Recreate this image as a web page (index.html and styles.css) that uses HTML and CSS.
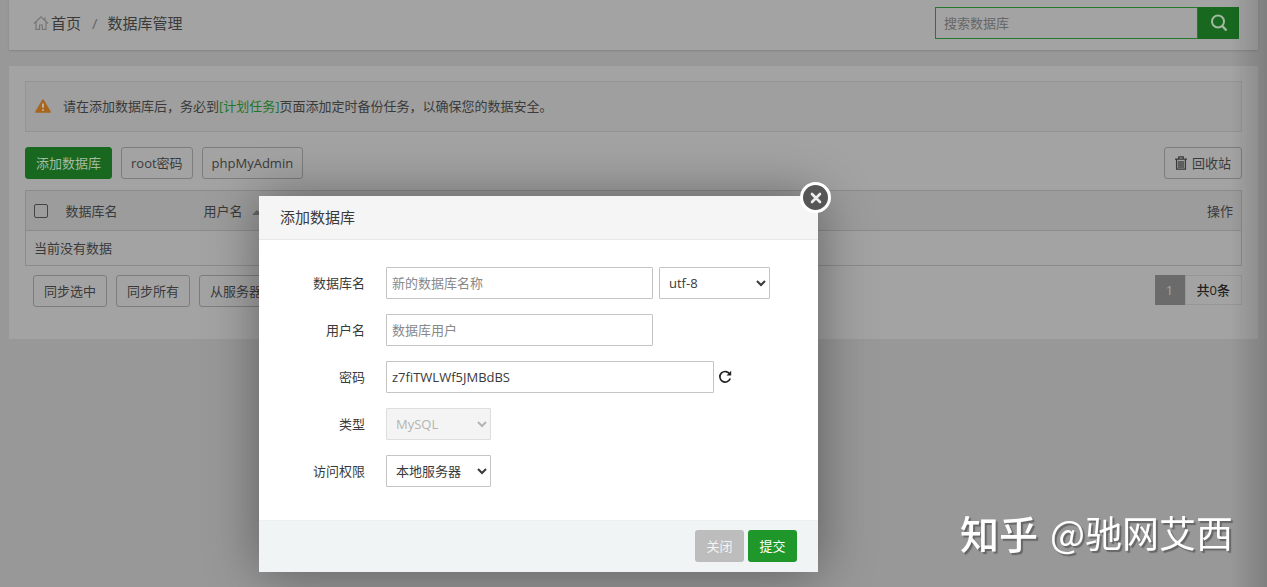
FILE: index.html
```html
<!DOCTYPE html>
<html lang="zh-CN">
<head>
<meta charset="utf-8">
<title>数据库管理</title>
<link rel="stylesheet" href="styles.css">
</head>
<body>
<div class="page">
  <header class="topbar">
    <nav class="crumbs">
      <a class="home" href="#"><svg class="home-icon" viewBox="0 0 16 16" width="16" height="16" fill="none" stroke="currentColor" stroke-width="1.2"><path d="M1 8.5 8 1.8l7 6.7M3 7v7.4h3.6V10h2.8v4.400H13V7M12 5.400V2.500"/></svg>首页</a>
      <span class="slash">/</span>
      <span>数据库管理</span>
    </nav>
    <form class="search">
      <input class="search-input" type="text" placeholder="搜索数据库" aria-label="搜索数据库">
      <button class="search-btn" type="button" aria-label="搜索"><svg viewBox="0 0 18 18" width="18" height="18" fill="none" stroke="currentColor" stroke-width="2"><circle cx="8" cy="7.500" r="6"/><path d="m12.300 12 4.200 4.500" stroke-width="2.400"/></svg></button>
    </form>
  </header>

  <main class="panel">
    <div class="notice">
      <svg class="warn" viewBox="0 0 16 14" width="16" height="14"><path d="M7.200.8q.8-1.200 1.600 0l6.900 11.800q.5 1.200-.8 1.200H1.100q-1.300 0-.8-1.200z" fill="#a9651c"/><path d="M8 4.500v4.200" stroke="#b5b0a8" stroke-width="2"/><circle cx="8" cy="11" r="1.100" fill="#b5b0a8"/></svg>
      <p class="notice-text">请在添加数据库后，务必到<a class="task-link" href="#">[计划任务]</a>页面添加定时备份任务，以确保您的数据安全。</p>
    </div>
    <div class="tools">
      <button class="btn btn-add" type="button">添加数据库</button>
      <button class="btn btn-tool" type="button">root密码</button>
      <button class="btn btn-tool" type="button">phpMyAdmin</button>
      <button class="btn btn-bin" type="button"><svg viewBox="0 0 12 14" width="12" height="14" fill="none" stroke="currentColor" stroke-width="1.300"><path d="M0 3.200h12M3.800 3V.9h4.400V3M1.600 3.500v9.700h8.800V3.500M4 5v7M6 5v7M8 5v7"/></svg>回收站</button>
    </div>
    <table class="grid">
      <thead>
        <tr>
          <th class="col-check"><input class="check" type="checkbox" aria-label="全选"></th>
          <th class="col-name">数据库名</th>
          <th>用户名<span class="sort"></span></th>
          <th class="col-ops">操作</th>
        </tr>
      </thead>
      <tbody>
        <tr><td colspan="4">当前没有数据</td></tr>
      </tbody>
    </table>
    <div class="below">
      <div class="sync">
        <button class="btn" type="button">同步选中</button>
        <button class="btn" type="button">同步所有</button>
        <button class="btn" type="button">从服务器获取</button>
      </div>
      <div class="pager"><span class="page-now">1</span><span class="page-all">共0条</span></div>
    </div>
  </main>
</div>

<div class="edge"></div>

<section class="dialog" role="dialog" aria-labelledby="dialog-title">
  <button class="close" type="button" aria-label="关闭窗口"><svg viewBox="0 0 12 12" width="12" height="12" stroke="currentColor" stroke-width="2.600" stroke-linecap="round"><path d="m2 2 8 8M10 2l-8 8"/></svg></button>
  <h2 class="dialog-title" id="dialog-title">添加数据库</h2>
  <form class="fields">
    <div class="field"><label class="label" for="db">数据库名</label><input class="control medium" id="db" type="text" placeholder="新的数据库名称"><select class="control charset" aria-label="编码"><option>utf-8</option></select></div>
    <div class="field"><label class="label" for="user">用户名</label><input class="control medium" id="user" type="text" placeholder="数据库用户"></div>
    <div class="field"><label class="label" for="pass">密码</label><input class="control wide" id="pass" type="text" value="z7fiTWLWf5JMBdBS"><button class="refresh" type="button" aria-label="随机密码"><svg viewBox="0 0 14 14" width="14" height="14" fill="none" stroke="currentColor" stroke-width="1.700"><path d="M11.800 4.200A5.300 5.300 0 1 0 12.200 8.500"/><path d="M13.200.8v4.800H8.500z" fill="currentColor" stroke="none"/></svg></button></div>
    <div class="field"><label class="label" for="type">类型</label><select class="control small" id="type" disabled><option>MySQL</option></select></div>
    <div class="field"><label class="label" for="access">访问权限</label><select class="control small" id="access"><option>本地服务器</option></select></div>
  </form>
  <footer class="actions">
    <button class="action" type="button">关闭</button>
    <button class="action submit" type="button">提交</button>
  </footer>
</section>

<div class="watermark"><span class="brand">知乎</span><span>@驰网艾西</span></div>
</body>
</html>
```
FILE: styles.css
```css
* { box-sizing: border-box; }

body {
  margin: 0;
  min-height: 100vh;
  background: #989898;
  color: #3a3a3a;
  font: 13px/20px "Open Sans", "Noto Sans CJK SC", sans-serif;
}

button, input, select { font: inherit; color: inherit; }
button { cursor: pointer; }
a { color: inherit; text-decoration: none; }

.page { padding: 0 9px; }

.topbar {
  display: flex;
  align-items: center;
  justify-content: space-between;
  height: 50px;
  padding: 0 19px 4px 24px;
  background: #a3a3a3;
  box-shadow: 0 1px 2px #858585;
}

.crumbs { display: flex; align-items: center; font-size: 15px; }
.home { display: flex; align-items: center; gap: 2px; }
.home-icon { color: #777; }
.slash { margin: 0 10px 0 11px; color: #666; }

.search { display: flex; width: 304px; height: 32px; }
.search-input {
  flex: 1;
  min-width: 0;
  padding: 0 8px;
  border: 1px solid #26792f;
  background: transparent;
}
.search-input::placeholder { color: #666; opacity: 1; }
.search-btn {
  display: grid;
  place-items: center;
  width: 41px;
  padding: 0;
  border: 0;
  background: #18691f;
  color: #a3b8a3;
}

.panel {
  margin-top: 16px;
  padding: 15px 16px 32px;
  background: #a3a3a3;
}

.notice {
  display: flex;
  align-items: center;
  gap: 12px;
  height: 51px;
  padding: 0 9px 2px;
  border: 1px solid #949494;
  background: #9f9f9f;
}
.notice-text { margin: 0; }
.task-link { color: #22762b; }

.tools { display: flex; gap: 9px; padding: 15px 0 11px; }

.btn {
  height: 32px;
  padding: 0 10px;
  border: 1px solid #7d7d7d;
  border-radius: 3px;
  background: transparent;
  white-space: nowrap;
}
.btn-add { border-color: #18691f; background: #18691f; color: #a6bba6; }
.btn-tool { padding: 0 9px; }
.btn-bin { display: flex; align-items: center; gap: 5px; margin-left: auto; }

.grid {
  width: 100%;
  border: 1px solid #8b8b8b;
  border-collapse: collapse;
  table-layout: fixed;
}
.grid th, .grid td { padding: 0 8px; text-align: left; font-weight: 400; }
.grid th { height: 40px; background: #9c9c9c; border-bottom: 1px solid #8b8b8b; }
.grid td { height: 35px; }
.grid .col-check { width: 32px; }
.grid .col-name { width: 138px; }
.grid .col-ops { text-align: right; }
.check {
  display: block;
  width: 14px;
  height: 14px;
  margin: 0;
  appearance: none;
  border: 1px solid #444;
  border-radius: 2px;
}
.sort {
  display: inline-block;
  margin-left: 9px;
  border: 5px solid transparent;
  border-top: 0;
  border-bottom-color: #666;
  vertical-align: middle;
}

.below { display: flex; justify-content: space-between; padding: 9px 0 0 8px; }
.sync { display: flex; gap: 9px; }
.pager { display: flex; height: 30px; line-height: 28px; }
.page-now { width: 30px; background: #6b6b6b; color: #a6a6a6; text-align: center; line-height: 30px; }
.page-all { padding: 0 11px; border: 1px solid #969696; color: #222; font-weight: 500; }

.edge {
  position: fixed;
  inset: 0 0 0 auto;
  width: 36px;
  background: linear-gradient(to right, transparent, rgba(0, 0, 0, 0.16));
  pointer-events: none;
}

.dialog {
  position: absolute;
  top: 196px;
  left: 259px;
  width: 559px;
  background: #fff;
  box-shadow: 1px 1px 50px rgba(0, 0, 0, 0.4);
}
.close {
  position: absolute;
  top: -14px;
  right: -13px;
  display: grid;
  place-items: center;
  width: 31px;
  height: 31px;
  padding: 0;
  border: 3px solid #fff;
  border-radius: 50%;
  background: #565656;
  color: #eee;
}
.dialog-title {
  margin: 0;
  padding: 0 21px;
  border-bottom: 1px solid #e8e8e8;
  background: #f5f5f5;
  font-size: 15px;
  font-weight: 400;
  line-height: 43px;
}
.fields { display: grid; gap: 15px; padding: 27px 0 33px; }
.field { display: flex; align-items: center; }
.label { width: 106px; margin-right: 21px; text-align: right; }
.control {
  height: 32px;
  padding: 0 5px;
  border: 1px solid #c4c4c4;
  border-radius: 1px;
  background: #fff;
}
.control::placeholder { color: #888; opacity: 1; }
.medium { width: 267px; }
.wide { width: 328px; }
.charset { width: 111px; margin-left: 6px; }
.small { width: 105px; }
.control:disabled { border-color: #ddd; background: #f4f4f4; color: #b5b5b0; opacity: 1; }
.refresh {
  display: grid;
  place-items: center;
  margin-left: 4px;
  padding: 0;
  border: 0;
  background: none;
  color: #222;
}

.actions {
  display: flex;
  justify-content: flex-end;
  gap: 4px;
  padding: 9px 21px 10px;
  border-top: 1px solid #edf0f0;
  background: #f0f4f5;
}
.action {
  width: 49px;
  height: 32px;
  padding: 0;
  border: 0;
  border-radius: 3px;
  background: #bdbdbd;
  color: #f4f4f4;
}
.submit { background: #20972b; color: #fff; }

.watermark {
  position: fixed;
  right: 34px;
  bottom: 28px;
  display: flex;
  align-items: center;
  gap: 12px;
  color: #fff;
  font: 37px/54px "Noto Sans CJK SC", sans-serif;
  text-shadow: 2px 2px 1px #666;
}
.brand { font-size: 39px; font-weight: 500; }
```
